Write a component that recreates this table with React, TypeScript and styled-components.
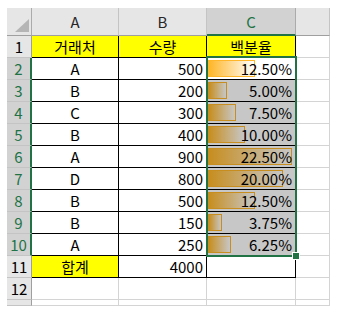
import React from 'react';
import styled, { createGlobalStyle, css } from 'styled-components';

const GREEN = '#217346';

interface Row {
  vendor: string;
  qty: number;
}

const rows: Row[] = [
  { vendor: 'A', qty: 500 },
  { vendor: 'B', qty: 200 },
  { vendor: 'C', qty: 300 },
  { vendor: 'B', qty: 400 },
  { vendor: 'A', qty: 900 },
  { vendor: 'D', qty: 800 },
  { vendor: 'B', qty: 500 },
  { vendor: 'B', qty: 150 },
  { vendor: 'A', qty: 250 },
];

const total = rows.reduce((sum, r) => sum + r.qty, 0);
const maxQty = Math.max(...rows.map(r => r.qty));
const BAR_MAX = 84;

const GlobalStyle = createGlobalStyle`
  body {
    margin: 0;
    background: #ffffff;
  }
`;

const Page = styled.div`
  padding: 8px 0 0 7px;
`;

const Sheet = styled.div`
  position: relative;
  display: grid;
  grid-template-columns: 25px 87px 88px 89px 34px;
  grid-template-rows: 28px repeat(12, 22px) 6px;
  width: 323px;
  font-family: 'Noto Sans CJK KR', sans-serif;
  font-size: 15px;
  color: #000;
`;

const Corner = styled.div`
  display: flex;
  align-items: flex-end;
  justify-content: flex-end;
  padding: 0 2px 3px 0;
  background: #e6e6e6;
  border-right: 1px solid #ababab;
  border-bottom: 1px solid #9f9f9f;
  box-sizing: border-box;
`;

const Triangle = styled.span`
  width: 14px;
  height: 13px;
  background: #b5b5b5;
  clip-path: polygon(100% 0, 100% 100%, 0 100%);
`;

const ColHead = styled.div<{ $selected?: boolean }>`
  display: flex;
  align-items: center;
  justify-content: center;
  box-sizing: border-box;
  background: #e6e6e6;
  color: #262626;
  border-right: 1px solid #c4c4c4;
  border-bottom: 1px solid #9f9f9f;
  ${p =>
    p.$selected &&
    css`
      background: #d2d2d2;
      color: ${GREEN};
      border-bottom: 2px solid ${GREEN};
      border-right-color: #ababab;
    `}
`;

const RowHead = styled.div<{ $selected?: boolean }>`
  display: flex;
  align-items: center;
  justify-content: center;
  box-sizing: border-box;
  background: #e6e6e6;
  color: #000;
  border-right: 1px solid #9f9f9f;
  border-bottom: 1px solid #c4c4c4;
  ${p =>
    p.$selected &&
    css`
      background: #d2d2d2;
      color: ${GREEN};
      border-right: 2px solid ${GREEN};
    `}
`;

const Cell = styled.div<{
  $align?: 'center' | 'right';
  $fill?: string;
  $table?: boolean;
  $selected?: boolean;
}>`
  position: relative;
  display: flex;
  align-items: center;
  justify-content: ${p => (p.$align === 'right' ? 'flex-end' : 'center')};
  padding: 0 3px;
  box-sizing: border-box;
  background: ${p => p.$fill || '#ffffff'};
  border-right: 1px solid ${p => (p.$table ? '#000' : '#d4d4d4')};
  border-bottom: 1px solid ${p => (p.$table ? '#000' : '#d4d4d4')};
  ${p =>
    p.$selected &&
    css`
      &::after {
        content: '';
        position: absolute;
        inset: 0;
        background: rgba(0, 0, 0, 0.22);
      }
    `}
`;

const Bar = styled.span`
  position: absolute;
  left: 1px;
  top: 2px;
  bottom: 2px;
  box-sizing: border-box;
  border: 1px solid #ffb628;
  background: linear-gradient(to right, #ffb628, #ffffff);
`;

const Value = styled.span`
  position: relative;
  z-index: 1;
`;

const Selection = styled.div`
  position: absolute;
  left: 199px;
  top: 48px;
  width: 91px;
  height: 201px;
  box-sizing: border-box;
  border: 2px solid ${GREEN};
  pointer-events: none;
`;

const FillHandle = styled.span`
  position: absolute;
  right: -5px;
  bottom: -5px;
  width: 6px;
  height: 6px;
  background: ${GREEN};
  border: 1px solid #fff;
`;

const YELLOW = '#ffff00';

const App = () => (
  <Page>
    <GlobalStyle />
    <Sheet>
      <Corner>
        <Triangle />
      </Corner>
      <ColHead>A</ColHead>
      <ColHead>B</ColHead>
      <ColHead $selected>C</ColHead>
      <ColHead />

      <RowHead>1</RowHead>
      <Cell $table $fill={YELLOW}>거래처</Cell>
      <Cell $table $fill={YELLOW}>수량</Cell>
      <Cell $table $fill={YELLOW}>백분율</Cell>
      <Cell />

      {rows.map((r, i) => {
        const pct = (r.qty / total) * 100;
        return (
          <React.Fragment key={i}>
            <RowHead $selected>{i + 2}</RowHead>
            <Cell $table>{r.vendor}</Cell>
            <Cell $table $align="right">{r.qty}</Cell>
            <Cell $table $align="right" $selected={i > 0}>
              <Bar style={{ width: Math.round((r.qty / maxQty) * BAR_MAX) }} />
              <Value>{pct.toFixed(2)}%</Value>
            </Cell>
            <Cell />
          </React.Fragment>
        );
      })}

      <RowHead>11</RowHead>
      <Cell $table $fill={YELLOW}>합계</Cell>
      <Cell $table $align="right">{total}</Cell>
      <Cell $table />
      <Cell />

      <RowHead>12</RowHead>
      <Cell />
      <Cell />
      <Cell />
      <Cell />

      <RowHead />
      <Cell />
      <Cell />
      <Cell />
      <Cell />

      <Selection>
        <FillHandle />
      </Selection>
    </Sheet>
  </Page>
);

export default App;
